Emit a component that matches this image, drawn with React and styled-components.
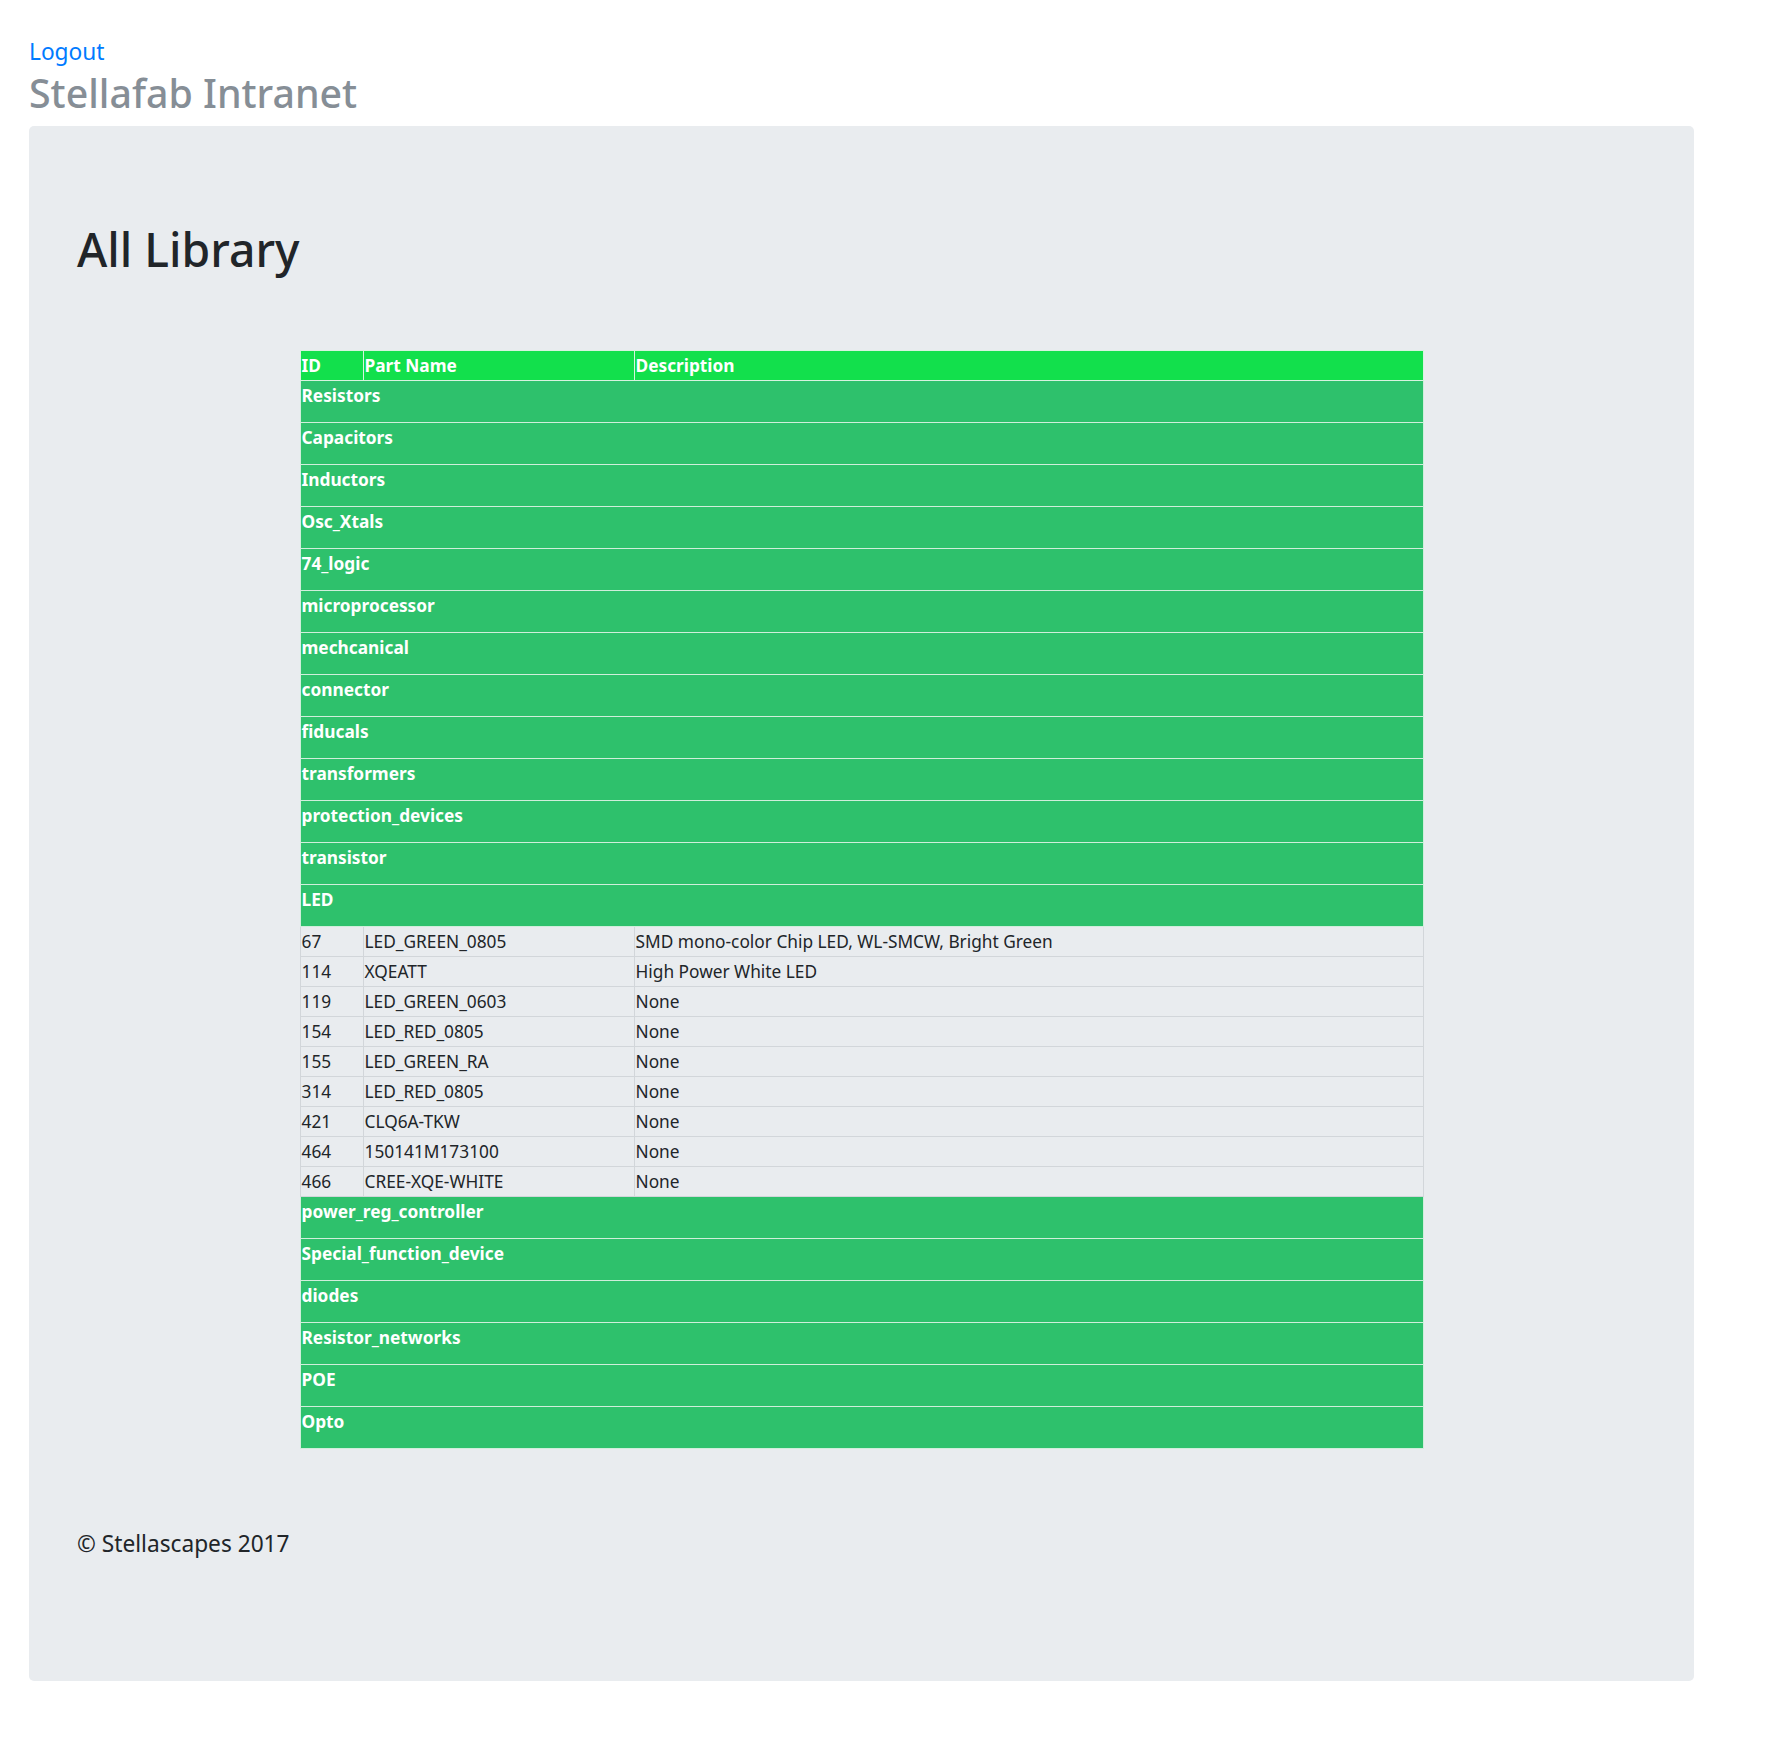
import React from 'react'
import styled, { createGlobalStyle } from 'styled-components'

const GlobalStyle = createGlobalStyle`
  body {
    margin: 0;
    background: #fff;
    color: #212529;
    font-family: 'Noto Sans', 'Open Sans', sans-serif;
    font-size: 18px;
    line-height: 1.5;
  }
`

const Page = styled.div`
  padding: 37px 71px 60px 29px;
`

const LogoutLink = styled.a`
  display: block;
  width: max-content;
  color: #007bff;
  font-size: 22.7px;
  line-height: 30px;
  text-decoration: none;
`

const SiteTitle = styled.h1`
  margin: 0 0 7px;
  color: #868e96;
  font-size: 39.3px;
  font-weight: 500;
  line-height: 52px;
`

const Jumbotron = styled.main`
  background: #e9ecef;
  border-radius: 5px;
  padding: 94px 48px 120px 48px;
`

const PageHeading = styled.h1`
  margin: 0 0 70px;
  font-size: 46.3px;
  font-weight: 500;
  line-height: 60px;
  color: #212529;
`

const LibraryTable = styled.table`
  width: 1124px;
  margin: 0 auto;
  border-collapse: collapse;
  table-layout: fixed;
  font-size: 17.3px;
`

const HeadCell = styled.th`
  background: #12e04c;
  color: #fff;
  font-weight: 700;
  text-align: left;
  padding: 1px;
  line-height: 27px;
  border: 1px solid #d7f3df;
`

const CategoryCell = styled.td`
  background: #2ec16c;
  color: #fff;
  font-weight: 700;
  padding: 1px 1px 13px;
  line-height: 27px;
  border: 1px solid #cfeedb;
`

const Cell = styled.td`
  padding: 1px;
  line-height: 27px;
  border: 1px solid #d2d6da;
  white-space: nowrap;
  overflow: hidden;
`

const Footer = styled.p`
  margin: 78px 0 0;
  font-size: 22.7px;
  font-weight: 400;
  line-height: 34px;
`

const before = [
  'Resistors', 'Capacitors', 'Inductors', 'Osc_Xtals', '74_logic', 'microprocessor',
  'mechcanical', 'connector', 'fiducals', 'transformers', 'protection_devices', 'transistor'
]

const after = [
  'power_reg_controller', 'Special_function_device', 'diodes', 'Resistor_networks', 'POE', 'Opto'
]

const leds = [
  [67, 'LED_GREEN_0805', 'SMD mono-color Chip LED, WL-SMCW, Bright Green'],
  [114, 'XQEATT', 'High Power White LED'],
  [119, 'LED_GREEN_0603', 'None'],
  [154, 'LED_RED_0805', 'None'],
  [155, 'LED_GREEN_RA', 'None'],
  [314, 'LED_RED_0805', 'None'],
  [421, 'CLQ6A-TKW', 'None'],
  [464, '150141M173100', 'None'],
  [466, 'CREE-XQE-WHITE', 'None']
]

const Category = ({ name }) => (
  <tr>
    <CategoryCell colSpan={3}>{name}</CategoryCell>
  </tr>
)

export default function App () {
  return (
    <Page>
      <GlobalStyle />
      <LogoutLink href='#'>Logout</LogoutLink>
      <SiteTitle>Stellafab Intranet</SiteTitle>
      <Jumbotron>
        <PageHeading>All Library</PageHeading>
        <LibraryTable>
          <colgroup>
            <col style={{ width: 63 }} />
            <col style={{ width: 271 }} />
            <col />
          </colgroup>
          <thead>
            <tr>
              <HeadCell>ID</HeadCell>
              <HeadCell>Part Name</HeadCell>
              <HeadCell>Description</HeadCell>
            </tr>
          </thead>
          <tbody>
            {before.map(name => <Category key={name} name={name} />)}
            <Category name='LED' />
            {leds.map(([id, part, desc]) => (
              <tr key={id}>
                <Cell>{id}</Cell>
                <Cell>{part}</Cell>
                <Cell>{desc}</Cell>
              </tr>
            ))}
            {after.map(name => <Category key={name} name={name} />)}
          </tbody>
        </LibraryTable>
        <Footer>© Stellascapes 2017</Footer>
      </Jumbotron>
    </Page>
  )
}
